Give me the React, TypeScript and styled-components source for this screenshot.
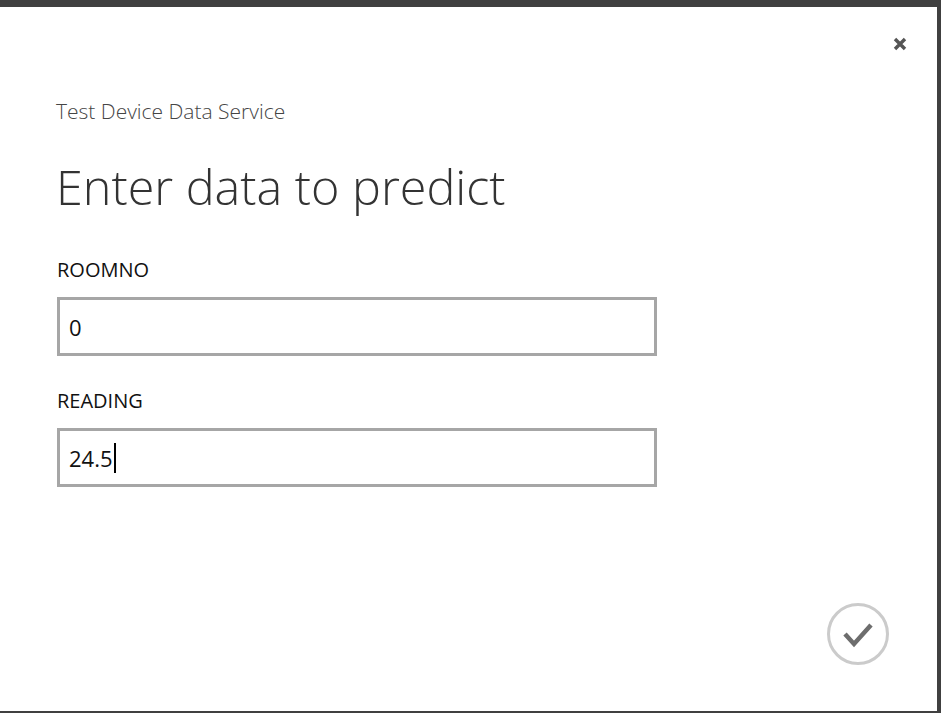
import styled, { createGlobalStyle } from "styled-components";

const GlobalStyle = createGlobalStyle`
  html, body {
    margin: 0;
    padding: 0;
    background: #404040;
  }
  body {
    font-family: "Open Sans", "Noto Sans", "Liberation Sans", sans-serif;
  }
`;

const Frame = styled.div`
  box-sizing: border-box;
  height: 713px;
  border-top: 7px solid #404040;
  border-right: 4px solid #404040;
  border-bottom: 2px solid #404040;
  background: #fff;
  display: flex;
  flex-direction: column;
`;

const TopBar = styled.div`
  display: flex;
  justify-content: flex-end;
  padding: 30px 30px 0 0;
`;

const CloseButton = styled.button`
  width: 14px;
  height: 14px;
  padding: 0;
  border: 0;
  background: none;
  display: flex;
  cursor: pointer;
`;

const Content = styled.div`
  flex: 1;
  padding: 48px 0 0 56px;
  display: flex;
  flex-direction: column;
`;

const Subtitle = styled.div`
  font-size: 21px;
  line-height: 24px;
  font-weight: 300;
  color: #454545;
`;

const Title = styled.h1`
  margin: 33px 0 0;
  font-size: 48.5px;
  line-height: 60px;
  font-weight: 300;
  color: #333;
`;

const Form = styled.div`
  margin-top: 42px;
  display: flex;
  flex-direction: column;
  gap: 33px;
`;

const Field = styled.div`
  display: flex;
  flex-direction: column;
  gap: 15px;
`;

const Label = styled.label`
  font-size: 20px;
  line-height: 24px;
  color: #111;
  padding-left: 1px;
`;

const InputBox = styled.div`
  box-sizing: border-box;
  width: 600px;
  height: 59px;
  margin-left: 1px;
  border: 3px solid #a6a6a6;
  padding: 0 9px;
  display: flex;
  align-items: center;
  font-size: 22px;
  color: #111;
`;

const Caret = styled.span`
  display: inline-block;
  width: 2px;
  height: 30px;
  background: #000;
  margin-left: 1px;
`;

const Footer = styled.div`
  display: flex;
  justify-content: flex-end;
  padding: 0 48px 46px 0;
`;

const OkButton = styled.button`
  width: 62px;
  height: 62px;
  padding: 0;
  border: 0;
  background: none;
  cursor: pointer;
`;

function App() {
  return (
    <>
      <GlobalStyle />
      <Frame>
        <TopBar>
          <CloseButton aria-label="Close">
            <svg width="14" height="14" viewBox="0 0 14 14">
              <path d="M2 2 L12 12 M12 2 L2 12" stroke="#555" strokeWidth="3.4" />
            </svg>
          </CloseButton>
        </TopBar>
        <Content>
          <Subtitle>Test Device Data Service</Subtitle>
          <Title>Enter data to predict</Title>
          <Form>
            <Field>
              <Label>ROOMNO</Label>
              <InputBox>0</InputBox>
            </Field>
            <Field>
              <Label>READING</Label>
              <InputBox>
                24.5
                <Caret />
              </InputBox>
            </Field>
          </Form>
        </Content>
        <Footer>
          <OkButton aria-label="OK">
            <svg width="62" height="62" viewBox="0 0 62 62">
              <circle cx="31" cy="31" r="29.5" fill="none" stroke="#cbcbcb" strokeWidth="3" />
              <path d="M18 31 L27 41 L44 22" fill="none" stroke="#6d6d6d" strokeWidth="4.5" />
            </svg>
          </OkButton>
        </Footer>
      </Frame>
    </>
  );
}

export default App;
